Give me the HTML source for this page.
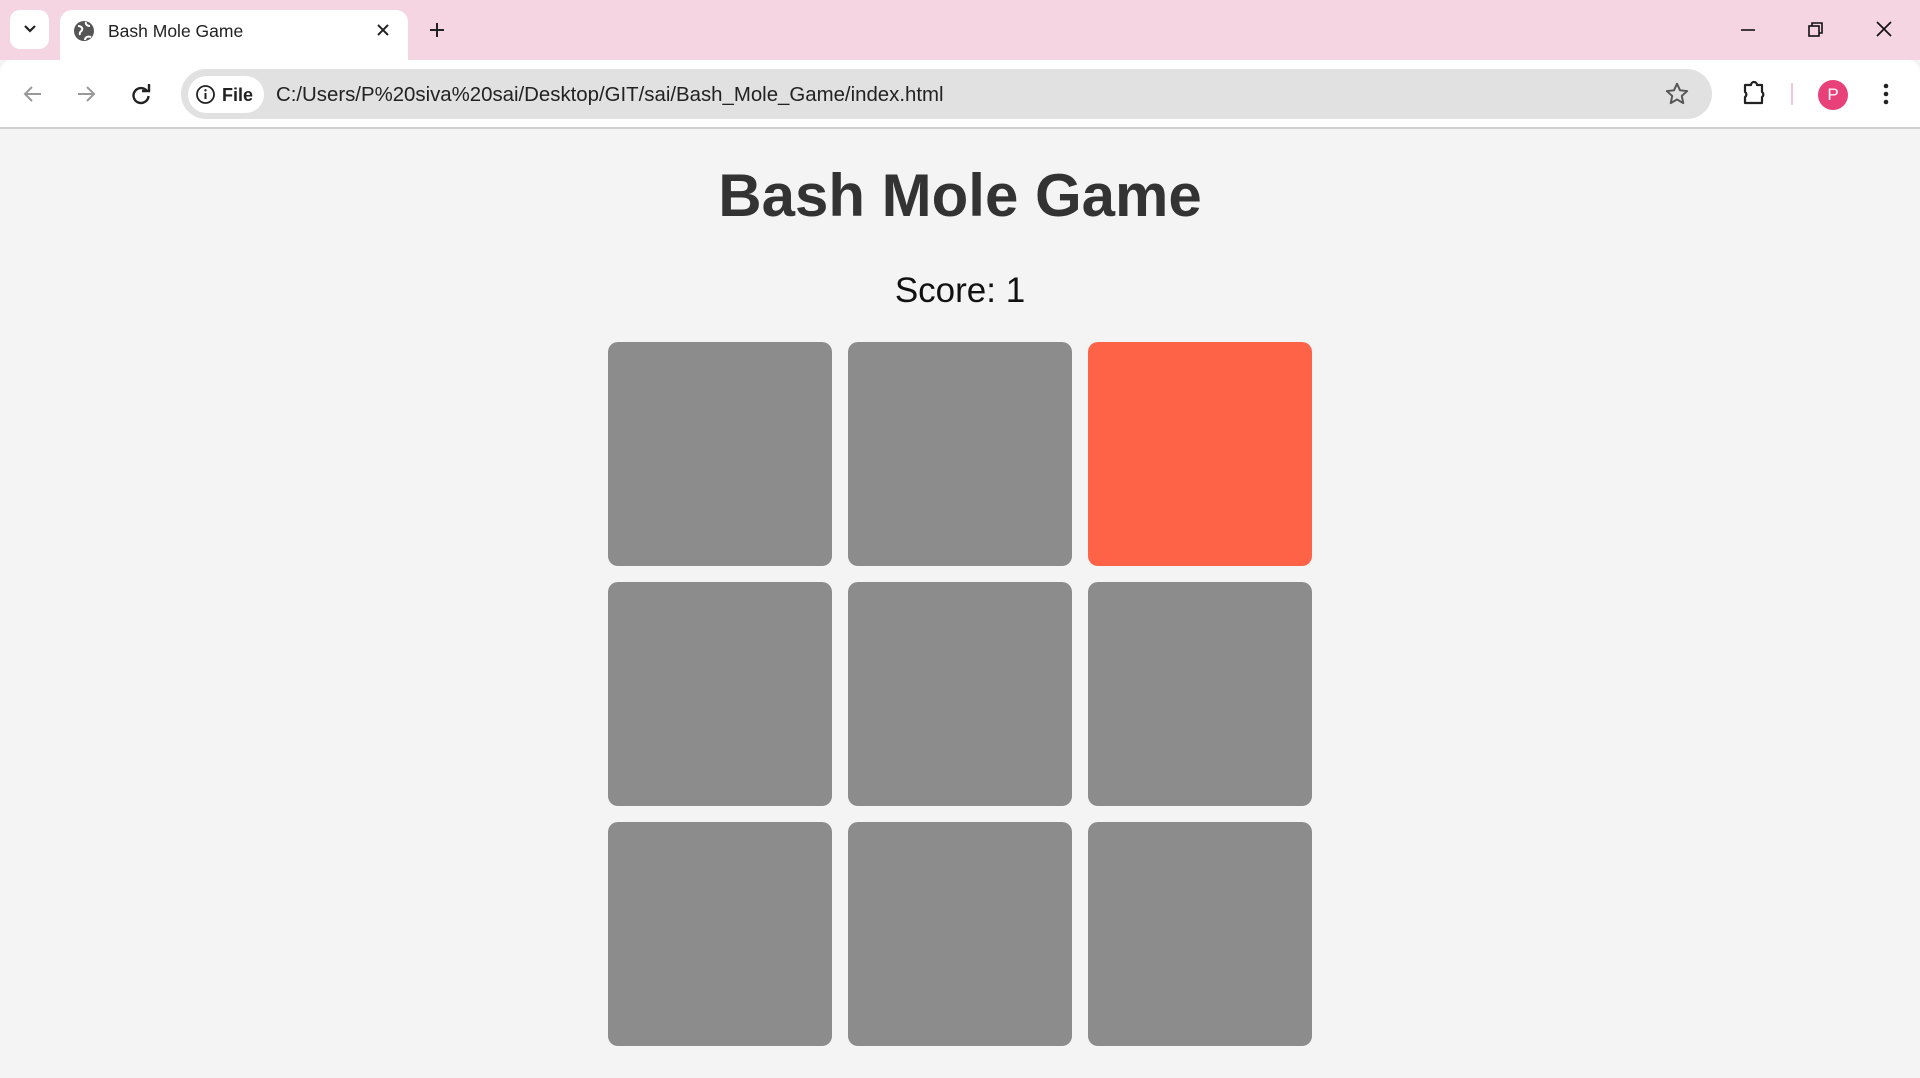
<!DOCTYPE html>
<html><head><meta charset="utf-8"><style>
*{margin:0;padding:0;box-sizing:border-box}
body{width:1920px;height:1078px;overflow:hidden;background:#f4f4f4;font-family:"Liberation Sans",Arial,sans-serif;position:relative}
.tabbar{position:absolute;left:0;top:0;width:1920px;height:60px;background:#f6d5e3}
.toolbar{position:absolute;left:0;top:60px;width:1920px;height:69px;background:#fff;border-radius:12px 12px 0 0;border-bottom:2px solid #cfcfcf}
.abs{position:absolute}
.tab{left:60px;top:10px;width:348px;height:52px;background:#fff;border-radius:12px 12px 0 0}
.drop{left:10px;top:10px;width:39px;height:39px;background:#fff;border-radius:10px}
.addr{left:181px;top:69px;width:1531px;height:50px;background:#e1e1e1;border-radius:25px}
.chip{left:188px;top:76px;width:76px;height:37px;background:#fff;border-radius:19px}
.cell{position:absolute;width:224px;height:224px;background:#8c8c8c;border-radius:10px}
</style></head><body>
<div class="tabbar"></div>
<div class="abs drop"></div>
<svg class="abs" style="left:22px;top:22px" width="16" height="14"><path d="M3 4l5 5 5-5" stroke="#222" stroke-width="2.2" fill="none"/></svg>
<div class="abs tab"></div>
<svg class="abs" style="left:73px;top:20px" width="22" height="22" viewBox="0 0 22 22"><circle cx="11" cy="11" r="10" fill="#555"/><path d="M5 6c3 0 5 2 4 4s-3 2-2 5M13 2c-1 3 2 4 4 4M12 20c0-3 3-4 6-3" stroke="#fff" stroke-width="2" fill="none"/></svg>
<div class="abs" style="left:108px;top:21px;font-size:17.5px;color:#222">Bash Mole Game</div>
<svg class="abs" style="left:376px;top:23px" width="14" height="14"><path d="M2 2l10 10M12 2L2 12" stroke="#222" stroke-width="2"/></svg>
<svg class="abs" style="left:428px;top:21px" width="18" height="18"><path d="M9 2v14M2 9h14" stroke="#222" stroke-width="2"/></svg>
<svg class="abs" style="left:1738px;top:20px" width="20" height="20"><path d="M3 10h14" stroke="#111" stroke-width="1.6"/></svg>
<svg class="abs" style="left:1806px;top:20px" width="20" height="20"><rect x="3" y="6" width="10" height="10" stroke="#111" stroke-width="1.6" fill="none"/><path d="M6 6V3h10v10h-3" stroke="#111" stroke-width="1.6" fill="none"/></svg>
<svg class="abs" style="left:1874px;top:19px" width="20" height="20"><path d="M3 3l14 14M17 3L3 17" stroke="#111" stroke-width="1.7"/></svg>
<div class="toolbar"></div>
<svg class="abs" style="left:22px;top:83px" width="22" height="22"><path d="M19 11H4M10 4l-7 7 7 7" stroke="#999" stroke-width="2" fill="none"/></svg>
<svg class="abs" style="left:75px;top:83px" width="22" height="22"><path d="M3 11h15M12 4l7 7-7 7" stroke="#999" stroke-width="2" fill="none"/></svg>
<svg class="abs" style="left:130px;top:83px" width="22" height="22"><path d="M17 8A7.5 7.5 0 1 0 18.5 13" stroke="#222" stroke-width="2.4" fill="none"/><path d="M12 8h7V1" stroke="#222" stroke-width="2.4" fill="none"/></svg>
<div class="abs addr"></div>
<div class="abs chip"></div>
<svg class="abs" style="left:195px;top:84px" width="21" height="21"><circle cx="10.5" cy="10.5" r="8.5" stroke="#222" stroke-width="1.8" fill="none"/><path d="M10.5 9v6" stroke="#222" stroke-width="2"/><circle cx="10.5" cy="6.3" r="1.2" fill="#222"/></svg>
<div class="abs" style="left:222px;top:85px;font-size:18px;font-weight:bold;color:#222">File</div>
<div class="abs" style="left:276px;top:84px;font-size:20.4px;color:#222">C:/Users/P%20siva%20sai/Desktop/GIT/sai/Bash_Mole_Game/index.html</div>
<svg class="abs" style="left:1664px;top:81px" width="26" height="26" viewBox="0 0 24 24"><path d="M12 2.5l2.8 6.1 6.6.7-5 4.5 1.4 6.6L12 17l-5.8 3.4 1.4-6.6-5-4.5 6.6-.7z" stroke="#555" stroke-width="1.8" fill="none" stroke-linejoin="round"/></svg>
<svg class="abs" style="left:1740px;top:80px" width="28" height="28" viewBox="0 0 28 28"><path d="M5 5h6a3 3 0 0 1 6 0h5v7a3 3 0 0 1 0 5v6H5v-6a3 3 0 0 0 0-5z" stroke="#222" stroke-width="2.2" fill="none" stroke-linejoin="round"/></svg>
<div class="abs" style="left:1791px;top:83px;width:2px;height:22px;background:#f2c6d8"></div>
<div class="abs" style="left:1818px;top:80px;width:30px;height:30px;border-radius:50%;background:#e8417a;color:#fff;font-size:17px;text-align:center;line-height:30px">P</div>
<svg class="abs" style="left:1880px;top:82px" width="12" height="24"><circle cx="6" cy="4" r="2.3" fill="#222"/><circle cx="6" cy="12" r="2.3" fill="#222"/><circle cx="6" cy="20" r="2.3" fill="#222"/></svg>
<div class="abs" style="left:0;top:162px;width:1920px;text-align:center;font-size:60px;font-weight:bold;color:#333;line-height:68px">Bash Mole Game</div>
<div class="abs" style="left:0;top:271px;width:1920px;text-align:center;font-size:35px;color:#111;line-height:40px">Score: 1</div>
<div class="cell" style="left:608px;top:342px"></div>
<div class="cell" style="left:848px;top:342px"></div>
<div class="cell" style="left:1088px;top:342px;background:#ff6347"></div>
<div class="cell" style="left:608px;top:582px"></div>
<div class="cell" style="left:848px;top:582px"></div>
<div class="cell" style="left:1088px;top:582px"></div>
<div class="cell" style="left:608px;top:822px"></div>
<div class="cell" style="left:848px;top:822px"></div>
<div class="cell" style="left:1088px;top:822px"></div>
</body></html>
